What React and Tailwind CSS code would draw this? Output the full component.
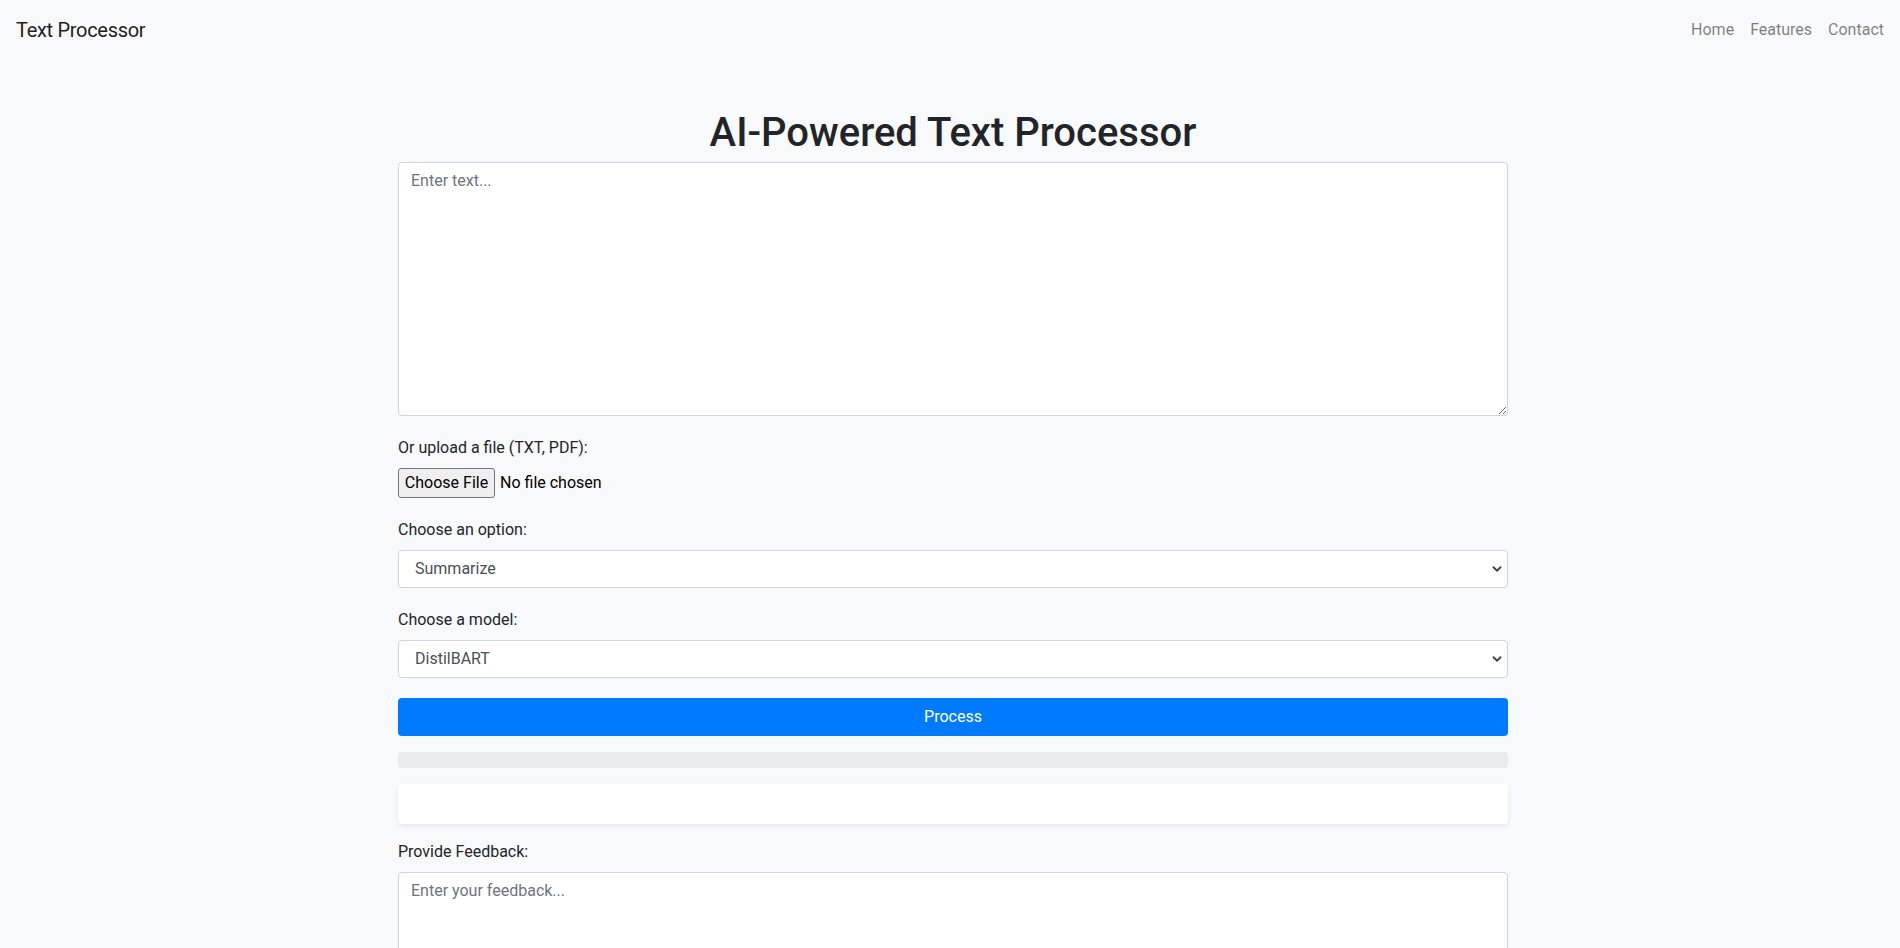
import { useState } from "react";

const Label = ({ children, htmlFor }) => (
  <label htmlFor={htmlFor} className="mb-2 block text-[16px] leading-6 text-[#212529]">
    {children}
  </label>
);

const Chevron = () => (
  <svg
    className="pointer-events-none absolute right-[6px] top-1/2 -translate-y-1/2"
    width="10"
    height="10"
    viewBox="0 0 10 10"
  >
    <path d="M1.5 3.2 L5 6.6 L8.5 3.2" fill="none" stroke="#3d4247" strokeWidth="1.9" strokeLinecap="round" />
  </svg>
);

const Select = ({ id, value, onChange, options }) => (
  <div className="relative">
    <select
      id={id}
      value={value}
      onChange={(e) => onChange(e.target.value)}
      className="block h-[38px] w-full appearance-none rounded-[4px] border border-[#ced4da] bg-white pl-[16px] pr-8 text-[16px] leading-6 text-[#495057] outline-none"
    >
      {options.map((o) => (
        <option key={o} value={o}>
          {o}
        </option>
      ))}
    </select>
    <Chevron />
  </div>
);

export default function App() {
  const [task, setTask] = useState("Summarize");
  const [model, setModel] = useState("DistilBART");

  return (
    <div className="min-h-screen bg-[#f8f9fa] font-['Roboto',sans-serif] text-[#212529]">
      <nav className="flex h-14 items-center justify-between px-4 pt-1">
        <a href="#" className="text-[20px] leading-[30px] tracking-[-0.3px] text-black/90">
          Text Processor
        </a>
        <ul className="flex text-[16px] leading-6 text-black/50">
          <li>
            <a href="#" className="block px-2">Home</a>
          </li>
          <li>
            <a href="#" className="block px-2">Features</a>
          </li>
          <li>
            <a href="#" className="block pl-2 pr-0">Contact</a>
          </li>
        </ul>
      </nav>

      <div className="pl-[6px]">
        <main className="mx-auto mt-[50px] w-[1110px]">
          <h1 className="mb-[5px] pt-[3px] text-center text-[40px] font-medium leading-[48px]">
            AI-Powered Text Processor
          </h1>

          <textarea
            rows={10}
            placeholder="Enter text..."
            className="block h-[254px] w-full resize-y rounded-[4px] border border-[#ced4da] bg-white px-3 py-[6px] text-[16px] leading-6 text-[#495057] outline-none placeholder:text-[#6c757d]"
          />

          <div className="mt-5">
            <Label htmlFor="file">Or upload a file (TXT, PDF):</Label>
            <div className="flex h-[30px] items-center">
              <label
                htmlFor="file"
                className="flex h-[30px] w-[97px] items-center justify-center rounded-[3px] border border-[#767676] bg-[#efefef] text-[16px] text-black"
              >
                Choose File
              </label>
              <span className="ml-[5px] text-[16px] text-black">No file chosen</span>
              <input id="file" type="file" className="hidden" />
            </div>
          </div>

          <div className="mt-5">
            <Label htmlFor="task">Choose an option:</Label>
            <Select id="task" value={task} onChange={setTask} options={["Summarize", "Paraphrase", "Translate"]} />
          </div>

          <div className="mt-5">
            <Label htmlFor="model">Choose a model:</Label>
            <Select id="model" value={model} onChange={setModel} options={["DistilBART", "BART", "T5"]} />
          </div>

          <button
            type="button"
            className="mt-5 block h-[38px] w-full rounded-[4px] bg-[#007bff] text-[16px] leading-6 text-white"
          >
            Process
          </button>

          <div className="mt-4 h-4 w-full overflow-hidden rounded-[4px] bg-[#e9ecef]">
            <div className="h-full w-0 bg-[#007bff]" />
          </div>

          <div className="mt-4 h-10 rounded-[4px] bg-white shadow-[0_0.125rem_0.25rem_rgba(0,0,0,0.075)]" />

          <div className="mt-4">
            <Label htmlFor="feedback">Provide Feedback:</Label>
            <textarea
              id="feedback"
              rows={4}
              placeholder="Enter your feedback..."
              className="block w-full resize-y rounded-[4px] border border-[#ced4da] bg-white px-3 py-[6px] text-[16px] leading-6 text-[#495057] outline-none placeholder:text-[#6c757d]"
            />
          </div>
        </main>
      </div>
    </div>
  );
}
